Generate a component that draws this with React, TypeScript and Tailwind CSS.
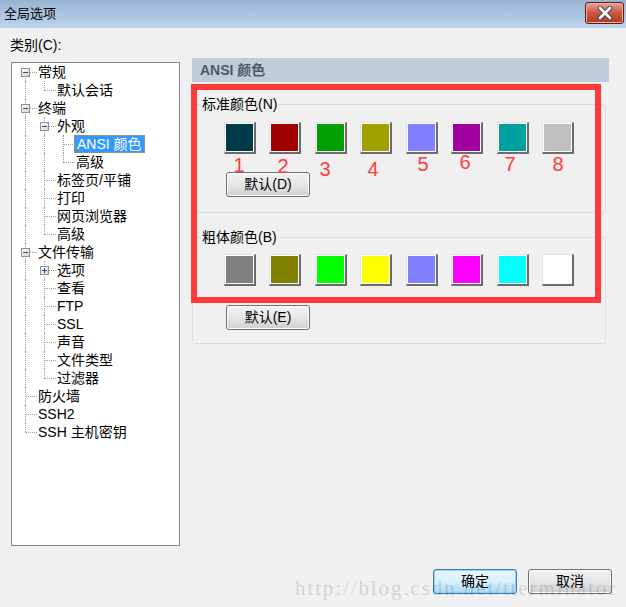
import React from "react";

type Node = { level: number; label: string; exp?: "-" | "+"; sel?: boolean };

const nodes: Node[] = [
  { level: 0, label: "常规", exp: "-" },
  { level: 1, label: "默认会话" },
  { level: 0, label: "终端", exp: "-" },
  { level: 1, label: "外观", exp: "-" },
  { level: 2, label: "ANSI 颜色", sel: true },
  { level: 2, label: "高级" },
  { level: 1, label: "标签页/平铺" },
  { level: 1, label: "打印" },
  { level: 1, label: "网页浏览器" },
  { level: 1, label: "高级" },
  { level: 0, label: "文件传输", exp: "-" },
  { level: 1, label: "选项", exp: "+" },
  { level: 1, label: "查看" },
  { level: 1, label: "FTP" },
  { level: 1, label: "SSL" },
  { level: 1, label: "声音" },
  { level: 1, label: "文件类型" },
  { level: 1, label: "过滤器" },
  { level: 0, label: "防火墙" },
  { level: 0, label: "SSH2" },
  { level: 0, label: "SSH 主机密钥" },
];

const rows = nodes.map((n, i) => {
  const hasNext = (lvl: number) => {
    for (let j = i + 1; j < nodes.length; j++) {
      if (nodes[j].level < lvl) return false;
      if (nodes[j].level === lvl) return true;
    }
    return false;
  };
  return {
    ...n,
    guides: Array.from({ length: n.level }, (_, k) => hasNext(k)),
    last: !hasNext(n.level),
    first: i === 0,
  };
});

const normal = [
  "bg-[#003b4a]",
  "bg-[#a00000]",
  "bg-[#00a000]",
  "bg-[#a0a000]",
  "bg-[#8080ff]",
  "bg-[#a000a0]",
  "bg-[#00a0a0]",
  "bg-[#c0c0c0]",
];

const bold = [
  "bg-[#808080]",
  "bg-[#808000]",
  "bg-[#00ff00]",
  "bg-[#ffff00]",
  "bg-[#8080ff]",
  "bg-[#ff00ff]",
  "bg-[#00ffff]",
  "bg-[#ffffff]",
];

// hand-drawn annotation numbers under the first row
const marks = [
  { n: "1", cls: "left-[233px] top-[154px]" },
  { n: "2", cls: "left-[277px] top-[155px]" },
  { n: "3", cls: "left-[319px] top-[158px]" },
  { n: "4", cls: "left-[367px] top-[158px]" },
  { n: "5", cls: "left-[417px] top-[153px]" },
  { n: "6", cls: "left-[459px] top-[151px]" },
  { n: "7", cls: "left-[504px] top-[153px]" },
  { n: "8", cls: "left-[552px] top-[153px]" },
];

const Expander = ({ plus }: { plus?: boolean }) => (
  <div className="absolute left-[5px] top-[5px] w-[9px] h-[9px] border border-[#919191] bg-linear-to-br from-white to-[#d2d2d2]">
    <div className="absolute left-[1px] top-[3px] w-[5px] h-[1px] bg-[#2b4a9a]" />
    {plus && <div className="absolute left-[3px] top-[1px] w-[1px] h-[5px] bg-[#2b4a9a]" />}
  </div>
);

const Tree = () => (
  <div className="h-[484px] border border-[#828790] bg-white pl-[4px]">
    {rows.map((r, i) => (
      <div key={i} className="flex h-[18px] items-center">
        {r.guides.map((g, k) => (
          <div key={k} className="relative w-[19px] h-[18px] shrink-0">
            {g && <div className="absolute left-[9px] top-0 bottom-0 border-l border-dotted border-[#a0a0a0]" />}
          </div>
        ))}
        <div className="relative w-[19px] h-[18px] shrink-0">
          <div
            className={
              r.first
                ? "absolute left-[9px] top-[9px] bottom-0 border-l border-dotted border-[#a0a0a0]"
                : r.last
                ? "absolute left-[9px] top-0 h-[9px] border-l border-dotted border-[#a0a0a0]"
                : "absolute left-[9px] top-0 bottom-0 border-l border-dotted border-[#a0a0a0]"
            }
          />
          <div className="absolute left-[9px] right-[-2px] top-[9px] border-t border-dotted border-[#a0a0a0]" />
          {r.exp && <Expander plus={r.exp === "+"} />}
        </div>
        <span
          className={
            r.sel
              ? "ml-[1px] px-[2px] h-[18px] leading-[16px] border border-dotted border-[#e08a00] bg-[#3399ff] text-white whitespace-nowrap"
              : "ml-[1px] px-[2px] h-[18px] leading-[18px] text-black whitespace-nowrap"
          }
        >
          {r.label}
        </span>
      </div>
    ))}
  </div>
);

const Swatch = ({ color }: { color: string }) => (
  <div className="w-[32px] h-[32px] border-t border-l border-t-[#e4e4e4] border-l-[#e4e4e4] border-r-2 border-b-2 border-r-[#6b6b6b] border-b-[#6b6b6b] bg-white p-[1px]">
    <div className={`w-full h-full ${color}`} />
  </div>
);

const Button = ({ children, primary }: { children: React.ReactNode; primary?: boolean }) => (
  <button
    className={
      primary
        ? "w-[84px] h-[25px] rounded-[3px] border border-[#3c7fb1] bg-linear-to-b from-[#eaf6fd] via-[#d9f0fc] to-[#a7d9f5] text-[14px] text-black shadow-[inset_0_0_0_1px_#8fd3f7]"
        : "w-[84px] h-[25px] rounded-[3px] border border-[#707070] bg-linear-to-b from-[#f2f2f2] via-[#e6e6e6] to-[#cfcfcf] text-[14px] text-black shadow-[inset_0_0_0_1px_#fcfcfc]"
    }
  >
    {children}
  </button>
);

const Group = ({
  title,
  colors,
  btn,
  cls,
}: {
  title: React.ReactNode;
  colors: string[];
  btn: React.ReactNode;
  cls: string;
}) => (
  <fieldset className={`w-[414px] border border-[#d5dfe5] rounded-[3px] ${cls}`}>
    <legend className="ml-[8px] px-[1px] h-[18px] leading-[18px] text-[14px] text-black">{title}</legend>
    <div className="pl-[31px]">
      <div className="flex justify-between w-[350px]">
        {colors.map((c, i) => (
          <Swatch key={i} color={c} />
        ))}
      </div>
      {btn}
    </div>
  </fieldset>
);

export default function App() {
  return (
    <div className="relative w-[626px] h-[607px] overflow-hidden bg-[#f0f0f0] font-['Liberation_Sans','Noto_Sans_CJK_SC',sans-serif] text-[14px] text-black">
      {/* Title bar */}
      <div className="h-[28px] flex items-center justify-between bg-linear-to-b from-[#98b3d2] to-[#bcd3ec] pl-[4px] pr-[2px]">
        <span className="text-[13px] text-black">全局选项</span>
        <div className="w-[39px] h-[22px] mb-[3px] rounded-[3px] border border-[#5a1c14] bg-linear-to-b from-[#e6a497] via-[#c9563f] to-[#b2391f] flex items-center justify-center shadow-[inset_0_0_0_1px_#f0b0a4]">
          <svg width="16" height="14" viewBox="0 0 16 14">
            <path d="M3 2 L13 12 M13 2 L3 12" stroke="#4b4b58" strokeWidth="4.6" strokeLinecap="round" />
            <path d="M3 2 L13 12 M13 2 L3 12" stroke="#ffffff" strokeWidth="2.6" strokeLinecap="round" />
          </svg>
        </div>
      </div>

      <div className="flex h-[518px]">
        {/* Left: categories */}
        <div className="ml-[11px] w-[169px]">
          <div className="h-[34px] flex items-center text-[14px] -ml-[1px]">类别(C):</div>
          <Tree />
        </div>

        {/* Right: ANSI colours */}
        <div className="ml-[12px] w-[417px] pt-[30px]">
          <div className="h-[24px] bg-[#bfcddb] flex items-center pl-[8px] text-[14px] font-bold text-[#4a5868]">
            ANSI 颜色
          </div>
          <Group
            title={<>标准颜色(N)</>}
            colors={normal}
            cls="mt-[13px] pt-[9px] pb-[15px]"
            btn={
              <div className="mt-[18px] pl-[2px]">
                <Button>默认(D)</Button>
              </div>
            }
          />
          <Group
            title={<>粗体颜色(B)</>}
            colors={bold}
            cls="mt-[15px] pt-[8px] pb-[13px]"
            btn={
              <div className="mt-[19px] pl-[2px]">
                <Button>默认(E)</Button>
              </div>
            }
          />
        </div>
      </div>

      {/* Bottom buttons */}
      <div className="mt-[23px] flex justify-end gap-[11px] pr-[14px]">
        <Button primary>确定</Button>
        <Button>取消</Button>
      </div>

      {/* Red annotation frame */}
      <div className="absolute left-[191px] top-[84px] w-[410px] h-[219px] border-[6px] border-[#ff3a3a] pointer-events-none" />
      {marks.map((m) => (
        <span
          key={m.n}
          className={`absolute ${m.cls} w-[12px] text-center text-[20px] leading-[22px] text-[#ff3a3a] pointer-events-none`}
        >
          {m.n}
        </span>
      ))}

      {/* Watermark */}
      <div className="absolute left-[295px] top-[575px] font-['Liberation_Serif',serif] text-[21px] leading-[26px] tracking-[1.9px] text-black/15 pointer-events-none whitespace-nowrap">
        http://blog.csdn.net/tterminator
      </div>
    </div>
  );
}
